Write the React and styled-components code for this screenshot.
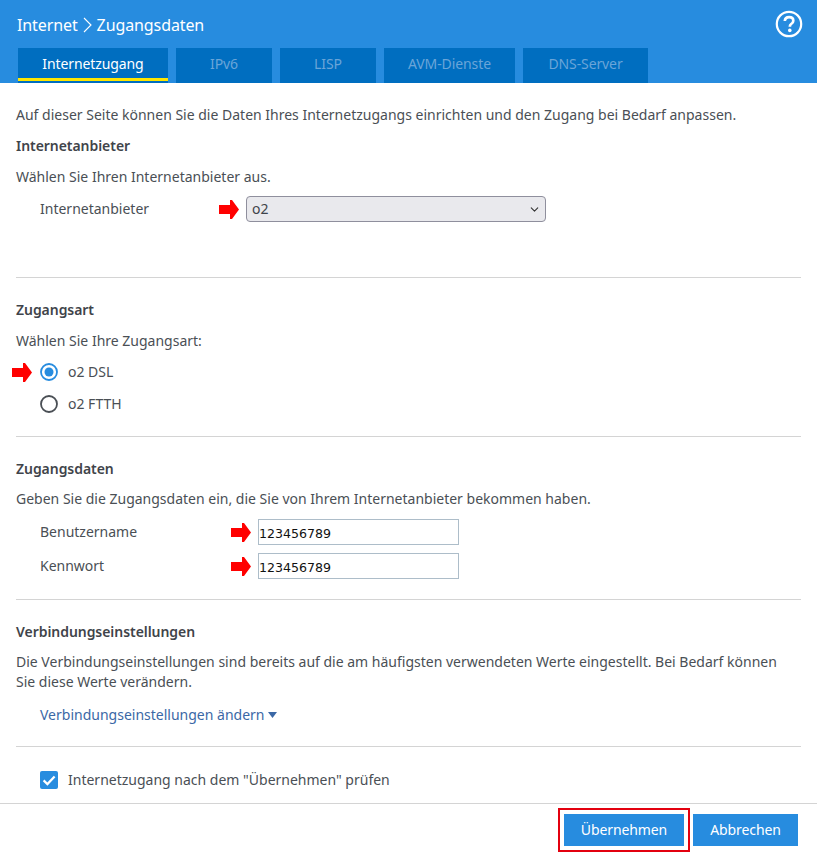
import React from "react";
import styled, { createGlobalStyle } from "styled-components";
import { ChevronDown } from "lucide-react";

const GlobalStyle = createGlobalStyle`
  html, body {
    margin: 0;
    padding: 0;
    background: #fff;
  }
  * {
    box-sizing: border-box;
  }
`;

const BLUE = "#278cdf";
const TEXT = "#4a4f55";

const Page = styled.div`
  width: 817px;
  height: 855px;
  display: flex;
  flex-direction: column;
  overflow: hidden;
  font-family: "Noto Sans", sans-serif;
  font-size: 14px;
  line-height: 20px;
  color: ${TEXT};
`;

const Header = styled.header`
  height: 83px;
  background: ${BLUE};
  padding: 0 16px 0 18px;
  display: flex;
  flex-direction: column;
  flex: none;
  letter-spacing: -0.1px;
`;

const TitleRow = styled.div`
  height: 48px;
  display: flex;
  align-items: center;
  justify-content: space-between;
`;

const Title = styled.div`
  color: #fff;
  font-size: 16px;
  margin-left: -1px;
  margin-top: 2px;
  display: flex;
  align-items: center;
  gap: 5px;
`;

const HelpIcon = styled.svg`
  width: 28px;
  height: 28px;
  margin-right: -2px;
  margin-top: 0;
`;

const Tabs = styled.nav`
  display: flex;
  gap: 8px;
  height: 35px;
`;

const Tab = styled.div`
  width: ${(p) => p.$width}px;
  background: #006ec0;
  color: ${(p) => (p.$active ? "#fff" : "#6aa5d8")};
  display: flex;
  align-items: flex-start;
  justify-content: center;
  padding-top: 6px;
  position: relative;

  &::after {
    content: "";
    display: ${(p) => (p.$active ? "block" : "none")};
    position: absolute;
    left: 0;
    right: 0;
    bottom: 2px;
    height: 3px;
    background: #ffe600;
  }
`;

const Content = styled.main`
  flex: 1;
  padding: 0 16px;
  min-height: 0;
`;

const Section = styled.section`
  height: ${(p) => p.$height}px;
  padding-top: ${(p) => p.$top || 0}px;
  border-bottom: ${(p) => (p.$last ? "none" : "1px solid #d4d4d4")};
`;

const Para = styled.p`
  margin: ${(p) => p.$mt || 0}px 0 0;
`;

const Heading = styled.h2`
  margin: ${(p) => p.$mt || 0}px 0 0;
  font-size: 14px;
  line-height: 20px;
  font-weight: 600;
  letter-spacing: -0.05px;
  color: #3f444a;
`;

const FieldRow = styled.div`
  display: flex;
  align-items: center;
  height: 26px;
  margin-top: ${(p) => p.$mt || 0}px;
  padding-left: 24px;
`;

const FieldLabel = styled.label`
  width: ${(p) => p.$width}px;
  flex: none;
`;

const ArrowIcon = styled.svg`
  width: 21px;
  height: 19px;
  margin-right: 6px;
  flex: none;
`;

const SelectBox = styled.div`
  width: 300px;
  height: 26px;
  background: #e9e9ed;
  border: 1px solid #8f8f9d;
  border-radius: 4px;
  padding: 0 4px 0 5px;
  display: flex;
  align-items: center;
  justify-content: space-between;
  color: #3f444a;
`;

const TextInput = styled.input`
  width: 201px;
  height: 26px;
  border: 1px solid #adbdc9;
  padding: 2px 0 0 0;
  font-family: "DejaVu Sans", sans-serif;
  font-size: 12.6px;
  color: #111;
  outline: none;
`;

const ChoiceRow = styled.div`
  display: flex;
  align-items: center;
  height: 20px;
  margin-top: ${(p) => p.$mt || 0}px;
  padding-left: ${(p) => p.$left}px;
`;

const MarkedChoiceRow = styled(ChoiceRow)`
  margin-left: -4px;
`;

const ChoiceIcon = styled.svg`
  width: 18px;
  height: 18px;
  margin-right: 10px;
  flex: none;
`;

const MarkedRadio = styled(ChoiceIcon)`
  margin-left: 1px;
`;

const Link = styled.a`
  display: flex;
  align-items: center;
  gap: 3px;
  margin: 13px 0 0 24px;
  color: #3b68a6;
`;

const Footer = styled.footer`
  flex: none;
  height: 52px;
  border-top: 1px solid #d4d4d4;
  display: flex;
  justify-content: flex-end;
  align-items: center;
  padding: 0 19px 0 0;
  gap: 9px;
  letter-spacing: -0.1px;
`;

const Button = styled.button`
  width: ${(p) => p.$width}px;
  height: 32px;
  border: none;
  background: ${BLUE};
  color: #fff;
  font-family: inherit;
  font-size: 14px;
  letter-spacing: inherit;
  padding: 0;
`;

const Marked = styled.div`
  padding: 4px;
  border: 2px solid #e3000f;
  margin: 0 -6px 0 0;
  display: flex;
`;

const RedArrow = () => (
  <ArrowIcon viewBox="0 0 21 19">
    <polygon points="0,5 11,5 11,0 13,0 20,9.5 13,19 11,19 11,14 0,14" fill="#f00" />
  </ArrowIcon>
);

const tabs = [
  { label: "Internetzugang", width: 150, active: true },
  { label: "IPv6", width: 96 },
  { label: "LISP", width: 96 },
  { label: "AVM-Dienste", width: 131 },
  { label: "DNS-Server", width: 125 },
];

export default function App() {
  return (
    <Page>
      <GlobalStyle />
      <Header>
        <TitleRow>
          <Title>
            <span>Internet</span>
            <svg width="9" height="16" viewBox="0 0 9 16">
              <path d="M1 1l7 7-7 7" fill="none" stroke="#fff" strokeWidth="1.1" />
            </svg>
            <span>Zugangsdaten</span>
          </Title>
          <HelpIcon viewBox="0 0 28 28">
            <circle cx="14" cy="14" r="12.2" fill="none" stroke="#fff" strokeWidth="2.2" />
            <path
              d="M9.8 11c.2-2.4 1.9-3.8 4.3-3.8 2.5 0 4.2 1.4 4.2 3.5 0 1.6-.9 2.5-2.1 3.3-1 .7-1.3 1.1-1.3 2.2v.6"
              fill="none"
              stroke="#fff"
              strokeWidth="2.7"
            />
            <circle cx="14.8" cy="20.4" r="1.8" fill="#fff" />
          </HelpIcon>
        </TitleRow>
        <Tabs>
          {tabs.map((tab) => (
            <Tab key={tab.label} $width={tab.width} $active={tab.active}>
              {tab.label}
            </Tab>
          ))}
        </Tabs>
      </Header>

      <Content>
        <Section $height={195} $top={22}>
          <Para>Auf dieser Seite können Sie die Daten Ihres Internetzugangs einrichten und den Zugang bei Bedarf anpassen.</Para>
          <Heading $mt={11}>Internetanbieter</Heading>
          <Para $mt={11}>Wählen Sie Ihren Internetanbieter aus.</Para>
          <FieldRow $mt={9}>
            <FieldLabel $width={179}>Internetanbieter</FieldLabel>
            <RedArrow />
            <SelectBox>
              <span>o2</span>
              <ChevronDown size={13} strokeWidth={2} color="#333" />
            </SelectBox>
          </FieldRow>
        </Section>

        <Section $height={159} $top={22}>
          <Heading>Zugangsart</Heading>
          <Para $mt={11}>Wählen Sie Ihre Zugangsart:</Para>
          <MarkedChoiceRow $mt={11} $left={0}>
            <RedArrow />
            <MarkedRadio viewBox="0 0 18 18">
              <circle cx="9" cy="9" r="8" fill="none" stroke={BLUE} strokeWidth="1.8" />
              <circle cx="9" cy="9" r="4.5" fill={BLUE} />
            </MarkedRadio>
            o2 DSL
          </MarkedChoiceRow>
          <ChoiceRow $mt={12} $left={24}>
            <ChoiceIcon viewBox="0 0 18 18">
              <circle cx="9" cy="9" r="8" fill="none" stroke={TEXT} strokeWidth="1.8" />
            </ChoiceIcon>
            o2 FTTH
          </ChoiceRow>
        </Section>

        <Section $height={163} $top={22}>
          <Heading>Zugangsdaten</Heading>
          <Para $mt={10}>Geben Sie die Zugangsdaten ein, die Sie von Ihrem Internetanbieter bekommen haben.</Para>
          <FieldRow $mt={10}>
            <FieldLabel $width={191}>Benutzername</FieldLabel>
            <RedArrow />
            <TextInput defaultValue="123456789" />
          </FieldRow>
          <FieldRow $mt={8}>
            <FieldLabel $width={191}>Kennwort</FieldLabel>
            <RedArrow />
            <TextInput defaultValue="123456789" />
          </FieldRow>
        </Section>

        <Section $height={147} $top={22}>
          <Heading>Verbindungseinstellungen</Heading>
          <Para $mt={10}>
            Die Verbindungseinstellungen sind bereits auf die am häufigsten verwendeten Werte eingestellt. Bei Bedarf können
            <br />
            Sie diese Werte verändern.
          </Para>
          <Link>
            Verbindungseinstellungen ändern
            <svg width="9" height="6" viewBox="0 0 9 6">
              <polygon points="0,0 9,0 4.5,6" fill="#3b68a6" />
            </svg>
          </Link>
        </Section>

        <Section $height={56} $top={23} $last>
          <ChoiceRow $left={24}>
            <ChoiceIcon viewBox="0 0 18 18">
              <rect width="18" height="18" rx="2" fill={BLUE} />
              <path d="M3.6 9.4l3.8 3.7L14.6 5.4" fill="none" stroke="#fff" strokeWidth="2.2" />
            </ChoiceIcon>
            Internetzugang nach dem "Übernehmen" prüfen
          </ChoiceRow>
        </Section>
      </Content>

      <Footer>
        <Marked>
          <Button $width={120}>Übernehmen</Button>
        </Marked>
        <Button $width={105}>Abbrechen</Button>
      </Footer>
    </Page>
  );
}
